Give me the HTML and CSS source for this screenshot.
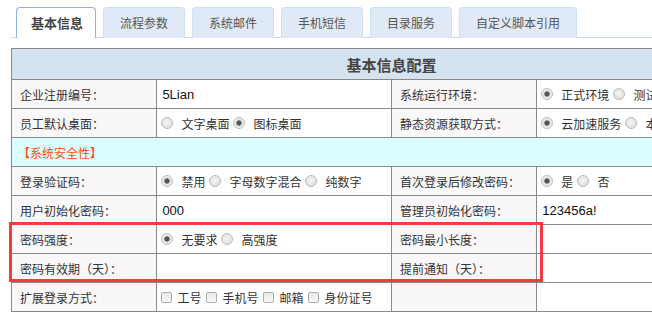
FILE: index.html
```html
<!DOCTYPE html>
<html lang="zh-CN">
  <head>
    <meta charset="UTF-8" />
    <title>基本信息配置</title>
    <link rel="stylesheet" href="styles.css">
  </head>
  <body>
    <div class="page">
      <div class="tabs">
        <div class="tab active">基本信息</div>
        <div class="tab">流程参数</div>
        <div class="tab">系统邮件</div>
        <div class="tab">手机短信</div>
        <div class="tab">目录服务</div>
        <div class="tab">自定义脚本引用</div>
      </div>

      <div class="config">
        <table class="config-table">
          <colgroup>
            <col class="col-label" />
            <col class="col-value" />
            <col class="col-label" />
            <col class="col-value" />
          </colgroup>
          <tr>
            <th colspan="4" class="title">基本信息配置</th>
          </tr>
          <tr>
            <td class="label">企业注册编号：</td>
            <td class="value"><input class="text" type="text" value="5Lian" /></td>
            <td class="label">系统运行环境：</td>
            <td class="value">
              <div class="choices">
                <input type="radio" name="env" checked /><span>正式环境</span>
                <input type="radio" name="env" /><span>测试环境</span>
              </div>
            </td>
          </tr>
          <tr>
            <td class="label">员工默认桌面：</td>
            <td class="value">
              <div class="choices">
                <input type="radio" name="desk" /><span>文字桌面</span>
                <input type="radio" name="desk" checked /><span>图标桌面</span>
              </div>
            </td>
            <td class="label">静态资源获取方式：</td>
            <td class="value">
              <div class="choices">
                <input type="radio" name="res" checked /><span>云加速服务</span>
                <input type="radio" name="res" /><span>本地服务器</span>
              </div>
            </td>
          </tr>
          <tr>
            <td colspan="4" class="section">【系统安全性】</td>
          </tr>
          <tr>
            <td class="label">登录验证码：</td>
            <td class="value">
              <div class="choices">
                <input type="radio" name="code" checked /><span>禁用</span>
                <input type="radio" name="code" /><span>字母数字混合</span>
                <input type="radio" name="code" /><span>纯数字</span>
              </div>
            </td>
            <td class="label">首次登录后修改密码：</td>
            <td class="value">
              <div class="choices">
                <input type="radio" name="first" checked /><span>是</span>
                <input type="radio" name="first" /><span>否</span>
              </div>
            </td>
          </tr>
          <tr>
            <td class="label">用户初始化密码：</td>
            <td class="value"><input class="text" type="text" value="000" /></td>
            <td class="label">管理员初始化密码：</td>
            <td class="value"><input class="text" type="text" value="123456a!" /></td>
          </tr>
          <tr>
            <td class="label">密码强度：</td>
            <td class="value">
              <div class="choices">
                <input type="radio" name="strength" checked /><span>无要求</span>
                <input type="radio" name="strength" /><span>高强度</span>
              </div>
            </td>
            <td class="label">密码最小长度：</td>
            <td class="value"></td>
          </tr>
          <tr>
            <td class="label">密码有效期（天）：</td>
            <td class="value"></td>
            <td class="label">提前通知（天）：</td>
            <td class="value"></td>
          </tr>
          <tr>
            <td class="label">扩展登录方式：</td>
            <td class="value">
              <div class="choices checks">
                <input type="checkbox" /><span>工号</span>
                <input type="checkbox" /><span>手机号</span>
                <input type="checkbox" /><span>邮箱</span>
                <input type="checkbox" /><span>身份证号</span>
              </div>
            </td>
            <td class="label"></td>
            <td class="value"></td>
          </tr>
        </table>

        <!-- highlight frame over the password rows -->
        <div class="highlight"></div>
      </div>
    </div>
  </body>
</html>
```

FILE: styles.css
```css
* {
  margin: 0;
  padding: 0;
  box-sizing: border-box;
}

body {
  font-family: "Noto Sans CJK SC", "Liberation Sans", sans-serif;
  font-size: 12px;
  color: #333;
  background-color: #fff;
  overflow: hidden;
}

.page {
  padding: 7px 0 0 11px;
}

/* Tabs */
.tabs {
  display: flex;
  gap: 7px;
  padding-left: 5px;
  border-bottom: 1px solid #c6d9ee;
  width: 800px;
}

.tab {
  height: 31px;
  line-height: 29px;
  padding: 0 16px;
  margin-bottom: -1px;
  background-color: #dfeaf6;
  border: 1px solid #cddff0;
  border-bottom: none;
  border-radius: 4px 4px 0 0;
  color: #555;
  white-space: nowrap;
}

.tab.active {
  background-color: #fff;
  border-color: #8fb4da;
  font-weight: bold;
  color: #444;
  font-size: 13px;
  padding: 0 14px;
  width: 80px;
  text-align: center;
}

/* Config table */
.config {
  position: relative;
  margin-top: 10px;
  width: 761px;
}

.config-table {
  width: 761px;
  border-collapse: collapse;
  table-layout: fixed;
  border: 1px solid #888;
}

.col-label {
  width: 145px;
}

.col-value {
  width: 234px;
}

.config-table th,
.config-table td {
  border: 1px solid #888;
  height: 29px;
  white-space: nowrap;
  overflow: hidden;
}

.title {
  height: 31px !important;
  background-color: #d5e3f1;
  font-size: 15px;
  font-weight: bold;
  color: #444;
  text-align: center;
}

.label {
  padding: 0 8px;
  background-color: #f9f7f8;
  color: #333;
}

.value {
  padding: 0 4px;
  background-color: #fff;
}

.section {
  padding: 0 6px;
  background-color: #dbfdfd;
  color: #ff4a0a;
  font-size: 12px;
}

.text {
  width: 227px;
  height: 24px;
  border: none;
  outline: none;
  background: #fff;
  font-family: "Liberation Sans", sans-serif;
  font-size: 13px;
  color: #111;
  padding: 0 1px;
}

/* radios and checkboxes */
.choices {
  display: flex;
  align-items: center;
}

.choices span {
  margin-right: 4px;
}

.choices input[type="radio"] {
  appearance: none;
  width: 12px;
  height: 12px;
  margin-right: 8px;
  border-radius: 50%;
  border: 1px solid #bdbdbd;
  background: radial-gradient(circle at 50% 45%, #f6f6f6, #d9d9d9);
}

.choices input[type="radio"]:checked {
  background: radial-gradient(circle, #555 0, #555 2.2px, #dcdcdc 3px, #f2f2f2 5px);
}

.checks input[type="checkbox"] {
  appearance: none;
  width: 11px;
  height: 11px;
  margin-right: 5px;
  border-radius: 2px;
  border: 1px solid #adadad;
  background: linear-gradient(#e9e9e9, #f8f8f8);
}

.checks span {
  margin-right: 5px;
}

.highlight {
  position: absolute;
  left: -2px;
  top: 174px;
  width: 534px;
  height: 60px;
  border: 3px solid #f53b3b;
  pointer-events: none;
}
```
